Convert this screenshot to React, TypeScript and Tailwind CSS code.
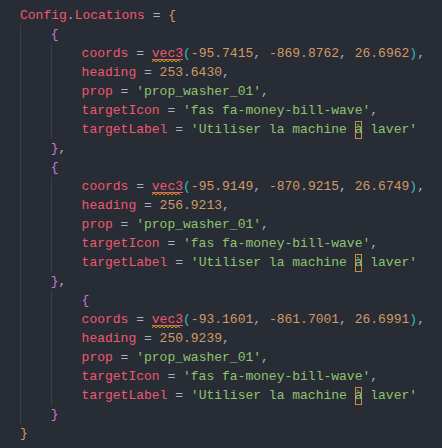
import React from "react";

type Tok = { t: string; c: string; kind?: "vec" | "box" };

const RED = "text-[#ef596f]";
const ORG = "text-[#d19a66]";
const GRN = "text-[#8fc46f]";
const PUN = "text-[#abb2bf]";
const CYN = "text-[#3ab7c6]";
const PUR = "text-[#c678dd]";

type Line = { guides: number; toks: Tok[] };

function block(coords: [string, string, string], heading: string): Line[] {
  return [
    {
      guides: 2,
      toks: [
        { t: "coords", c: RED },
        { t: " = ", c: PUN },
        { t: "vec3", c: RED, kind: "vec" },
        { t: "(", c: CYN },
        { t: coords[0], c: ORG },
        { t: ", ", c: PUN },
        { t: coords[1], c: ORG },
        { t: ", ", c: PUN },
        { t: coords[2], c: ORG },
        { t: ")", c: CYN },
        { t: ",", c: PUN },
      ],
    },
    {
      guides: 2,
      toks: [
        { t: "heading", c: RED },
        { t: " = ", c: PUN },
        { t: heading, c: ORG },
        { t: ",", c: PUN },
      ],
    },
    {
      guides: 2,
      toks: [
        { t: "prop", c: RED },
        { t: " = ", c: PUN },
        { t: "'prop_washer_01'", c: GRN },
        { t: ",", c: PUN },
      ],
    },
    {
      guides: 2,
      toks: [
        { t: "targetIcon", c: RED },
        { t: " = ", c: PUN },
        { t: "'fas fa-money-bill-wave'", c: GRN },
        { t: ",", c: PUN },
      ],
    },
    {
      guides: 2,
      toks: [
        { t: "targetLabel", c: RED },
        { t: " = ", c: PUN },
        { t: "'Utiliser la machine ", c: GRN },
        { t: "à", c: GRN, kind: "box" },
        { t: " laver'", c: GRN },
      ],
    },
  ];
}

const lines: Line[] = [
  {
    guides: 0,
    toks: [
      { t: "Config", c: RED },
      { t: ".", c: PUN },
      { t: "Locations", c: RED },
      { t: " = ", c: PUN },
      { t: "{", c: ORG },
    ],
  },
  { guides: 1, toks: [{ t: "{", c: PUR }] },
  ...block(["-95.7415", "-869.8762", "26.6962"], "253.6430"),
  { guides: 1, toks: [{ t: "}", c: PUR }, { t: ",", c: PUN }] },
  { guides: 1, toks: [{ t: "{", c: PUR }] },
  ...block(["-95.9149", "-870.9215", "26.6749"], "256.9213"),
  { guides: 1, toks: [{ t: "}", c: PUR }, { t: ",", c: PUN }] },
  { guides: 2, toks: [{ t: "{", c: PUR }] },
  ...block(["-93.1601", "-861.7001", "26.6991"], "250.9239"),
  { guides: 1, toks: [{ t: "}", c: PUR }] },
  { guides: 0, toks: [{ t: "}", c: ORG }] },
];

function Squiggle() {
  const pts: string[] = [];
  for (let x = 0; x <= 28; x += 2) {
    pts.push(`${x},${(x / 2) % 2 === 0 ? 3 : 0.8}`);
  }
  return (
    <svg
      className="absolute left-0 top-[15px]"
      width="29"
      height="4"
      viewBox="0 0 29 4"
    >
      <polyline points={pts.join(" ")} fill="none" stroke="#cca700" strokeWidth="1" />
    </svg>
  );
}

function TokView({ tok }: { tok: Tok }) {
  if (tok.kind === "vec") {
    return (
      <span className="relative inline-block h-[19px]">
        <span className={`${tok.c} underline decoration-[#ef596f] decoration-1 underline-offset-[2px]`}>
          {tok.t}
        </span>
        <Squiggle />
      </span>
    );
  }
  if (tok.kind === "box") {
    return (
      <span className={`${tok.c} inline-block h-[18px] leading-[18px] shadow-[inset_0_0_0_1px_#c98a4f]`}>
        {tok.t}
      </span>
    );
  }
  return <span className={tok.c}>{tok.t}</span>;
}

export default function App() {
  return (
    <div className="w-[442px] h-[448px] overflow-hidden bg-[#282c34] pt-[6px] pl-[20px]">
      <div
        className="flex flex-col text-[13px] leading-[19px] whitespace-pre"
        style={{ fontFamily: '"Liberation Mono", "DejaVu Sans Mono", monospace' }}
      >
        {lines.map((ln, i) => (
          <div key={i} className="flex h-[19px] items-stretch">
            {Array.from({ length: ln.guides }).map((_, g) => (
              <span key={g} className="w-[30.8px] shrink-0 border-l border-[#3b4048]" />
            ))}
            <span>
              {ln.toks.map((tok, j) => (
                <TokView key={j} tok={tok} />
              ))}
            </span>
          </div>
        ))}
      </div>
    </div>
  );
}
